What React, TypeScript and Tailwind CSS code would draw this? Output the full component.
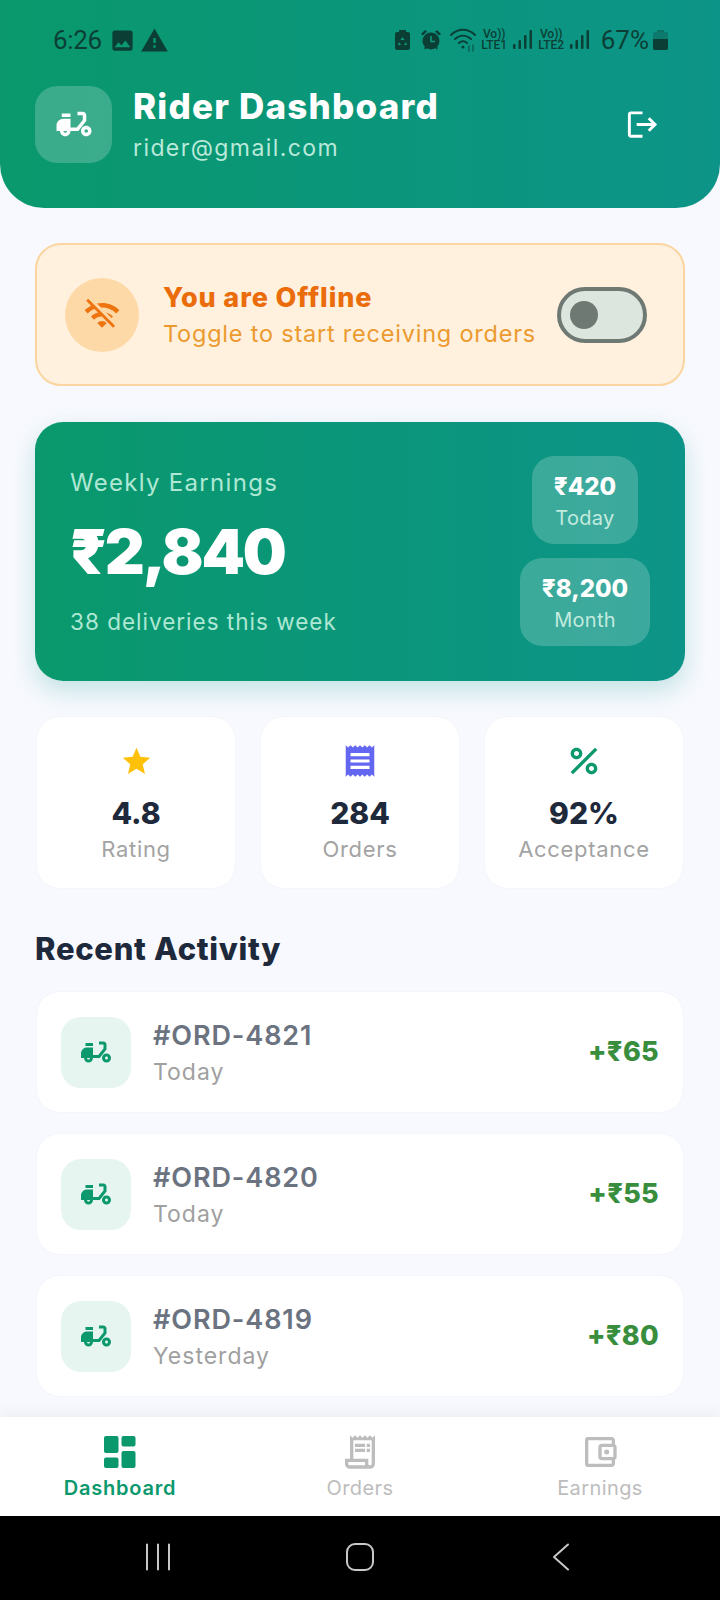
import {
  MdDeliveryDining,
  MdImage,
  MdLogout,
  MdOutlineAccountBalanceWallet,
  MdOutlineReceiptLong,
  MdPercent,
  MdReceipt,
  MdStar,
  MdWarning,
  MdWifiOff,
} from "react-icons/md";

const activity = [
  { id: "#ORD-4821", when: "Today", amount: "+₹65" },
  { id: "#ORD-4820", when: "Today", amount: "+₹55" },
  { id: "#ORD-4819", when: "Yesterday", amount: "+₹80" },
];

function Signal() {
  return (
    <svg width="19" height="20" viewBox="0 0 19 20" fill="#0b3f36">
      <rect x="0" y="14" width="2.5" height="5" rx="1" />
      <rect x="5.5" y="10" width="2.5" height="9" rx="1" />
      <rect x="11" y="5" width="2.5" height="14" rx="1" />
      <rect x="16.5" y="0" width="2.5" height="19" rx="1" />
    </svg>
  );
}

function Lte({ label }: { label: string }) {
  return (
    <div className="flex w-[27px] flex-col items-center text-[#0b3f36] font-['Roboto',sans-serif] font-medium text-[12px] leading-[11px]">
      <span>Vo))</span>
      <span>{label}</span>
    </div>
  );
}

function StatusBar() {
  return (
    <div className="flex h-[32px] items-center pl-[53px] pr-[52px] text-[#0b3f36]">
      <span className="w-[50px] font-['Roboto',sans-serif] text-[26px] leading-none tracking-[-0.3px]">6:26</span>
      <MdImage size={27} className="ml-[6px]" />
      <MdWarning size={29} className="ml-[4px]" />
      <div className="ml-auto flex items-center">
        <svg width="15" height="20" viewBox="0 0 15 20" fill="#0b3f36">
          <rect x="4" y="0" width="7" height="3" />
          <rect x="0" y="2" width="15" height="18" rx="2" />
          <path d="M7.5 7l2 3h-4zM4 12l2 3H3zM11 12l1 3H9z" fill="#0d9a7c" />
        </svg>
        <svg width="22" height="22" viewBox="0 0 22 22" fill="#0b3f36" className="ml-[10px]">
          <circle cx="11" cy="12" r="8.5" />
          <path d="M1 5l4-4 2 1.5-4 4zM21 5l-4-4-2 1.5 4 4zM4 19l2-2 1.5 1-2 2.5zM18 19l-2-2-1.5 1 2 2.5z" />
          <path d="M11 7v5.5h4" fill="none" stroke="#0d9a7c" strokeWidth="1.6" />
        </svg>
        <svg width="30" height="24" viewBox="0 0 30 24" fill="none" stroke="#0b3f36" strokeWidth="2" strokeLinecap="round" className="ml-[8px]">
          <path d="M1 7c7-7 17-7 24 0M5 11c5-4.500 11-4.500 16 0M9 15c3-2.500 5-2.500 8 0" />
          <circle cx="13" cy="19" r="1.500" fill="#0b3f36" stroke="none" />
          <path d="M19 23v-5M23 23v-6" strokeWidth="1.500" stroke="#0b5f50" />
        </svg>
        <div className="ml-[1px]">
          <Lte label="LTE1" />
        </div>
        <div className="ml-[5px]">
          <Signal />
        </div>
        <div className="ml-[6px]">
          <Lte label="LTE2" />
        </div>
        <div className="ml-[5px]">
          <Signal />
        </div>
        <span className="ml-[12px] font-['Roboto',sans-serif] text-[26px] leading-none">67%</span>
        <div className="ml-[4px] flex h-[20px] w-[15px] flex-col items-center">
          <div className="h-[2px] w-[7px] bg-[#0b3f36]/40" />
          <div className="flex h-[18px] w-full flex-col rounded-[2px] bg-[#0b3f36]/30">
            <div className="mt-auto h-[11px] rounded-b-[2px] bg-[#0b3f36]" />
          </div>
        </div>
      </div>
    </div>
  );
}

function Header() {
  return (
    <div className="h-[208px] shrink-0 rounded-b-[44px] bg-gradient-to-r from-[#0a986c] to-[#0d9488] pt-[24px]">
      <StatusBar />
      <div className="mt-[28px] flex items-center pl-[35px] pr-[60px]">
        <div className="flex h-[77px] w-[77px] items-center justify-center rounded-[22px] bg-white/20 text-white">
          <MdDeliveryDining size={42} />
        </div>
        <div className="ml-[21px]">
          <div className="text-[35px] font-extrabold leading-[44px] tracking-[1.2px] text-white">Rider Dashboard</div>
          <div className="mt-[4px] text-[23px] leading-[32px] tracking-[1.4px] text-[#b9e9d9]">rider@gmail.com</div>
        </div>
        <MdLogout size={35} className="ml-auto text-white" />
      </div>
    </div>
  );
}

function OfflineCard() {
  return (
    <div className="flex h-[143px] items-center rounded-[26px] border-2 border-[#fad59f] bg-[#fff1de] pl-[28px] pr-[36px]">
      <div className="flex h-[74px] w-[74px] shrink-0 items-center justify-center rounded-full bg-[#fed9a8] text-[#ee7410]">
        <MdWifiOff size={38} />
      </div>
      <div className="ml-[24px] pt-[2px]">
        <div className="text-[27px] font-extrabold leading-[36px] tracking-[0.9px] text-[#ea6c0a]">You are Offline</div>
        <div className="text-[23.5px] leading-[36px] tracking-[0.78px] text-[#ec9a2e]">Toggle to start receiving orders</div>
      </div>
      <div className="ml-auto flex h-[56px] w-[90px] items-center rounded-full border-[4px] border-[#6f7973] bg-[#dde5df] pl-[9px]">
        <div className="h-[28px] w-[28px] rounded-full bg-[#6f7973]" />
      </div>
    </div>
  );
}

function Pill({ value, label, width }: { value: string; label: string; width: string }) {
  return (
    <div className={`flex h-[88px] flex-col items-center justify-center rounded-[22px] bg-white/20 pt-[2px] ${width}`}>
      <div className="text-[24px] font-extrabold leading-[34px] text-white">{value}</div>
      <div className="text-[20px] leading-[28px] tracking-[0.3px] text-[#c3ebdf]">{label}</div>
    </div>
  );
}

function EarningsCard() {
  return (
    <div className="mt-[36px] flex h-[259px] items-center rounded-[28px] bg-gradient-to-r from-[#0a986c] to-[#0d9488] pl-[35px] pr-[35px] shadow-[0_10px_24px_rgba(13,148,136,0.22)]">
      <div>
        <div className="text-[24px] leading-[34px] tracking-[1.3px] text-[#aee8d4]">Weekly Earnings</div>
        <div className="mt-[16px] text-[62px] font-black leading-[72px] tracking-[-2.2px] text-white">₹2,840</div>
        <div className="mt-[18px] text-[22.5px] leading-[32px] tracking-[1px] text-[#aee8d4]">38 deliveries this week</div>
      </div>
      <div className="ml-auto flex -translate-y-[1px] flex-col items-center gap-[14px]">
        <Pill value="₹420" label="Today" width="w-[106px]" />
        <Pill value="₹8,200" label="Month" width="w-[130px]" />
      </div>
    </div>
  );
}

function Stat({ icon, value, label }: { icon: React.ReactNode; value: string; label: string }) {
  return (
    <div className="flex h-[173px] w-[200px] flex-col items-center rounded-[24px] border border-[#f4f6fb] bg-white">
      <div className="mt-[24px] flex h-[40px] items-center justify-center">{icon}</div>
      <div className="mt-[12px] text-[30px] font-extrabold leading-[40px] text-[#1e293b]">{value}</div>
      <div className="text-[22px] leading-[32px] tracking-[0.7px] text-[#a3a3a3]">{label}</div>
    </div>
  );
}

function ActivityRow({ id, when, amount }: { id: string; when: string; amount: string }) {
  return (
    <div className="flex h-[122px] items-center rounded-[24px] border border-[#f4f6fb] bg-white pl-[24px] pr-[24px]">
      <div className="flex h-[71px] w-[70px] items-center justify-center rounded-[20px] bg-[#e6f5ef] text-[#0a986c]">
        <MdDeliveryDining size={36} />
      </div>
      <div className="ml-[22px] pt-[2px]">
        <div className="text-[27px] font-semibold leading-[38px] tracking-[0.9px] text-[#6b7280]">{id}</div>
        <div className="text-[23px] leading-[34px] tracking-[1px] text-[#a0a0a0]">{when}</div>
      </div>
      <div className="ml-auto text-[27px] font-extrabold tracking-[0.3px] text-[#388e3c]">{amount}</div>
    </div>
  );
}

function NavItem({ icon, label, active }: { icon: React.ReactNode; label: string; active?: boolean }) {
  return (
    <div className={`flex flex-col items-center ${active ? "text-[#0a986c]" : "text-[#bdbdbd]"}`}>
      {icon}
      <span className={`mt-[3px] text-[20px] leading-[26px] ${active ? "font-semibold tracking-[0.8px]" : "font-normal tracking-[0.4px]"}`}>{label}</span>
    </div>
  );
}

function DashboardIcon() {
  return (
    <div className="flex h-[40px] items-center">
      <svg width="32" height="32" viewBox="0 0 32 32" fill="currentColor">
        <rect x="0" y="0" width="14.5" height="17" rx="2" />
        <rect x="0" y="21.500" width="14.5" height="10.500" rx="2" />
        <rect x="17.500" y="0" width="14" height="10.500" rx="2" />
        <rect x="17.500" y="15" width="14" height="17" rx="2" />
      </svg>
    </div>
  );
}

export default function App() {
  return (
    <div className="flex h-[1600px] w-[720px] flex-col overflow-hidden bg-[#f7f9fe] font-['Inter',sans-serif]">
      <Header />
      <div className="flex-1 px-[35px] pt-[35px]">
        <OfflineCard />
        <EarningsCard />
        <div className="mt-[35px] flex justify-between px-[1px]">
          <Stat icon={<MdStar size={33} className="text-[#ffc107]" />} value="4.8" label="Rating" />
          <Stat icon={<MdReceipt size={38} className="text-[#6366f1]" />} value="284" label="Orders" />
          <Stat icon={<MdPercent size={40} className="text-[#0a986c]" />} value="92%" label="Acceptance" />
        </div>
        <div className="mt-[39px] text-[31px] font-extrabold leading-[42px] tracking-[0.7px] text-[#1e293b]">Recent Activity</div>
        <div className="mt-[21px] flex flex-col gap-[20px] px-[1px]">
          {activity.map((a) => (
            <ActivityRow key={a.id} {...a} />
          ))}
        </div>
      </div>
      <div className="flex h-[99px] shrink-0 items-start bg-white pt-[15px] shadow-[0_-4px_16px_rgba(0,0,0,0.05)]">
        <div className="flex w-[240px] justify-center">
          <NavItem icon={<DashboardIcon />} label="Dashboard" active />
        </div>
        <div className="flex w-[240px] justify-center">
          <NavItem icon={<MdOutlineReceiptLong size={40} />} label="Orders" />
        </div>
        <div className="flex w-[240px] justify-center">
          <NavItem icon={<MdOutlineAccountBalanceWallet size={40} />} label="Earnings" />
        </div>
      </div>
      <div className="flex h-[84px] shrink-0 items-start bg-black pl-[145px] pt-[27px]">
        <svg width="26" height="28" viewBox="0 0 26 28" fill="none" stroke="#c8c8c8" strokeWidth="2" strokeLinecap="round">
          <path d="M2 1.500v25M13 1.500v25M24 1.500v25" />
        </svg>
        <div className="ml-[175px] h-[28px] w-[28px] rounded-[9px] border-[2px] border-[#c8c8c8]" />
        <svg width="18" height="28" viewBox="0 0 18 28" fill="none" stroke="#c8c8c8" strokeWidth="2" strokeLinecap="round" strokeLinejoin="round" className="ml-[178px]">
          <path d="M16 1.500L2 14l14 12.500" />
        </svg>
      </div>
    </div>
  );
}
